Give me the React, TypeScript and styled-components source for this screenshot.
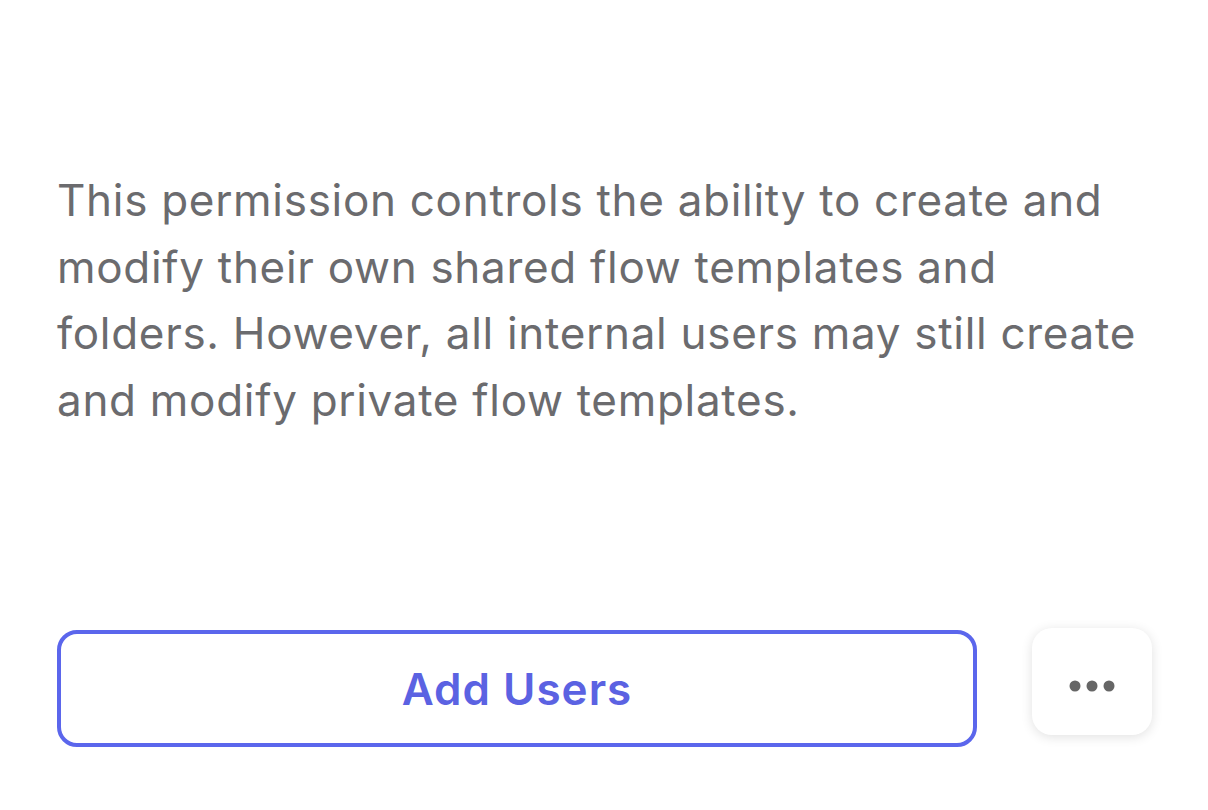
import styled, { createGlobalStyle } from 'styled-components'

const GlobalStyle = createGlobalStyle`
  html, body {
    margin: 0;
    padding: 0;
    background: #fff;
  }
  body {
    font-family: Inter, "Noto Sans", sans-serif;
    -webkit-font-smoothing: antialiased;
  }
`

const Page = styled.div`
  width: 1208px;
  height: 810px;
  box-sizing: border-box;
  padding: 167px 10px 0 57px;
  display: flex;
  flex-direction: column;
`

const Description = styled.p`
  margin: 0;
  width: 1092px;
  font-size: 44px;
  line-height: 66.5px;
  color: #6b6b6e;
  letter-spacing: 0.7px;
`

const Actions = styled.div`
  margin-top: 197px;
  display: flex;
  align-items: flex-start;
  gap: 55px;
`

const AddButton = styled.button`
  width: 920px;
  height: 117px;
  box-sizing: border-box;
  border: 4px solid #5b66ec;
  border-radius: 20px;
  background: #fff;
  color: #5b62e2;
  font-family: Inter, "Noto Sans", sans-serif;
  font-size: 44px;
  font-weight: 600;
  letter-spacing: 1px;
  cursor: pointer;
`

const MoreButton = styled.button`
  width: 120px;
  height: 107px;
  margin-top: -2px;
  padding: 9px 0 0;
  border: none;
  border-radius: 20px;
  background: #fff;
  box-shadow: 0 2px 12px rgba(0, 0, 0, 0.12);
  display: flex;
  align-items: center;
  justify-content: center;
  cursor: pointer;
`

function Dots() {
  return (
    <svg width="46" height="14" viewBox="0 0 46 14">
      <circle cx="6" cy="7" r="5.5" fill="#666" />
      <circle cx="23" cy="7" r="5.5" fill="#666" />
      <circle cx="40" cy="7" r="5.5" fill="#666" />
    </svg>
  )
}

export default function App() {
  return (
    <>
      <GlobalStyle />
      <Page>
        <Description>
          This permission controls the ability to create and modify their own shared flow
          templates and folders. However, all internal users may still create and modify
          private flow templates.
        </Description>
        <Actions>
          <AddButton>Add Users</AddButton>
          <MoreButton aria-label="More">
            <Dots />
          </MoreButton>
        </Actions>
      </Page>
    </>
  )
}
